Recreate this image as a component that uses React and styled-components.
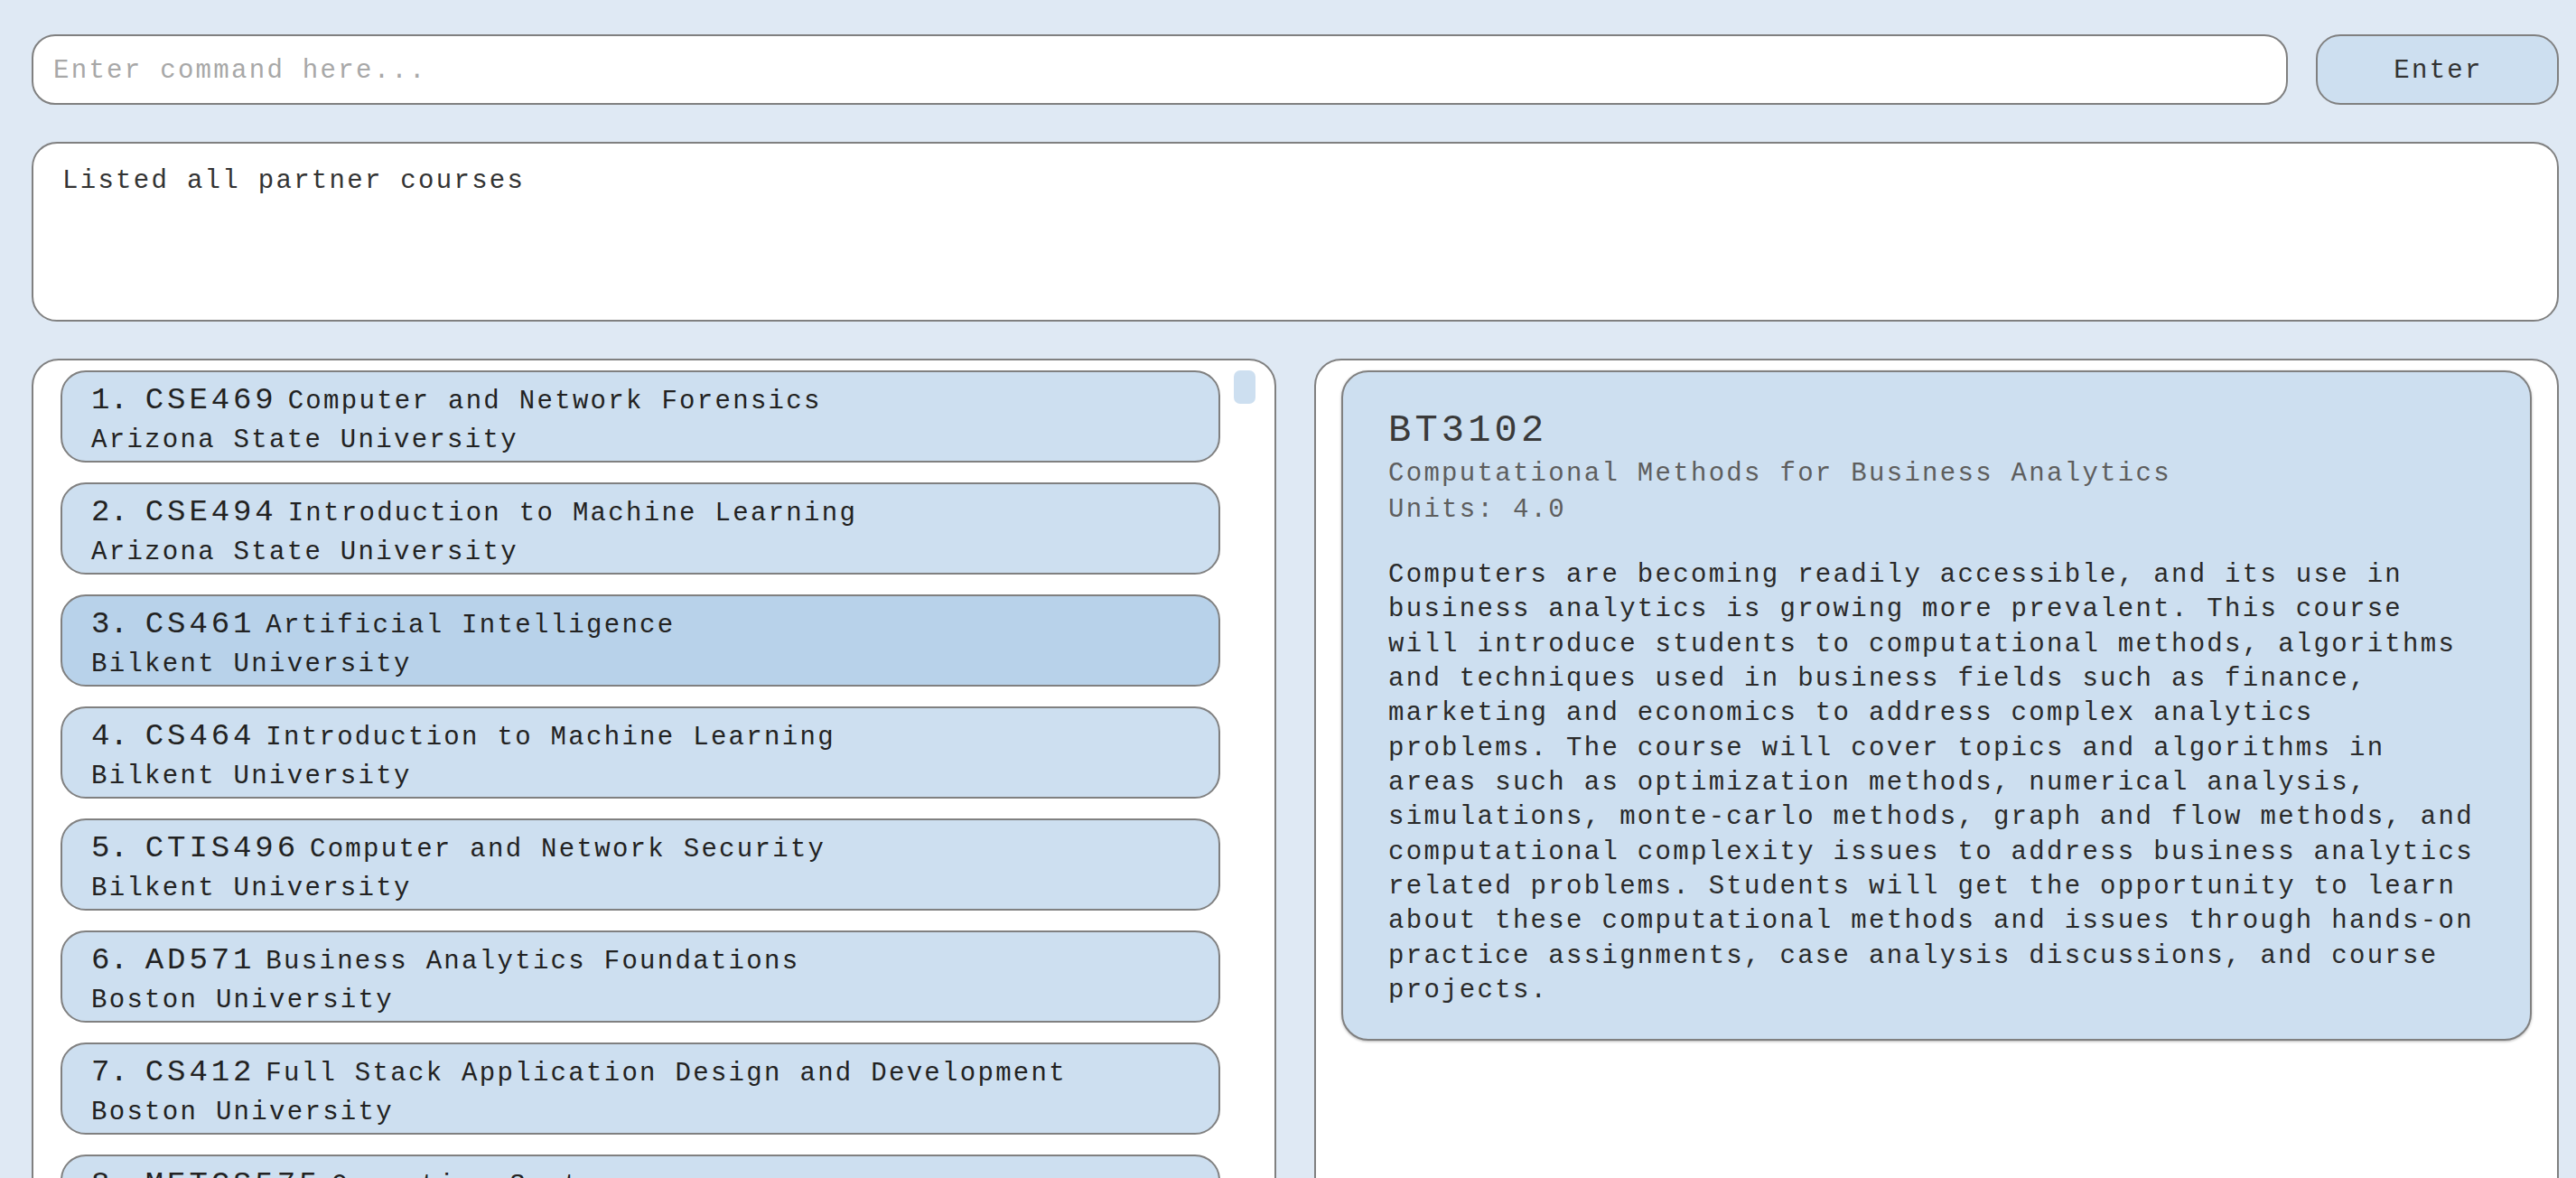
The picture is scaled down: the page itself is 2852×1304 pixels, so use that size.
import React from "react";
import styled, { createGlobalStyle } from "styled-components";

const GlobalStyle = createGlobalStyle`
  html, body {
    margin: 0;
    padding: 0;
    overflow: hidden;
    background: #dfe9f4;
  }
  body {
    font-family: "Liberation Mono", "DejaVu Sans Mono", monospace;
    color: #2e2e2e;
  }
  * { box-sizing: border-box; }
`;

const mono = `
  font-family: "Liberation Mono", "DejaVu Sans Mono", monospace;
  font-size: 29px;
  letter-spacing: 2.3px;
`;

const Page = styled.div`
  display: flex;
  flex-direction: column;
  gap: 41px;
  padding: 38px 19px 0 35px;
  height: 1304px;
`;

const CommandBar = styled.div`
  display: flex;
  gap: 31px;
  height: 78px;
`;

const CommandInput = styled.input`
  flex: 1;
  height: 78px;
  border: 2px solid #808080;
  border-radius: 26px;
  background: #ffffff;
  padding: 3px 22px 0;
  ${mono}
  color: #2e2e2e;
  outline: none;
  &::placeholder {
    color: #a8a8a8;
  }
`;

const EnterButton = styled.button`
  width: 269px;
  height: 78px;
  border: 2px solid #808080;
  border-radius: 27px;
  background: #cddff0;
  ${mono}
  color: #333333;
  padding: 3px 0 0 2px;
  cursor: pointer;
`;

const ResultBox = styled.div`
  height: 199px;
  background: #ffffff;
  border: 2px solid #808080;
  border-radius: 28px;
  padding: 22px 32px;
  ${mono}
  line-height: 40px;
  color: #333333;
`;

const Panels = styled.div`
  display: grid;
  grid-template-columns: 1fr 1fr;
  gap: 42px;
  flex: 1;
  min-height: 0;
`;

const Panel = styled.div`
  background: #ffffff;
  border: 2px solid #808080;
  border-radius: 30px;
  height: 960px;
  overflow: hidden;
`;

const ListPanel = styled(Panel)`
  display: flex;
  gap: 15px;
  padding: 11px 21px 0 30px;
`;

const CardColumn = styled.div`
  flex: 1;
  display: flex;
  flex-direction: column;
  gap: 22px;
  overflow: hidden;
`;

const ScrollThumb = styled.div`
  flex: none;
  width: 24px;
  height: 37px;
  border-radius: 7px;
  background: #cddff0;
`;

const CourseCard = styled.div`
  flex: none;
  height: 102px;
  border: 2px solid #808080;
  border-radius: 28px;
  background: ${(p) => (p.$selected ? "#b8d2ea" : "#cddff0")};
  padding: 8px 32px 0;
  color: #222222;
`;

const CardHeadRow = styled.div`
  display: flex;
  align-items: baseline;
  white-space: nowrap;
`;

const Index = styled.span`
  font-family: "Liberation Mono", "DejaVu Sans Mono", monospace;
  font-size: 34px;
  line-height: 46px;
  margin-right: 19px;
`;

const Code = styled.span`
  font-family: "Liberation Mono", "DejaVu Sans Mono", monospace;
  font-size: 34px;
  letter-spacing: 3.9px;
  line-height: 46px;
`;

const CourseTitle = styled.span`
  ${mono}
  line-height: 46px;
  margin-left: 12px;
`;

const University = styled.div`
  ${mono}
  line-height: 40px;
  white-space: nowrap;
`;

const DetailPanel = styled(Panel)`
  padding: 11px 28px 0;
`;

const DetailCard = styled.div`
  background: #cddff0;
  border: 2px solid #808080;
  border-radius: 30px;
  padding: 40px 50px 34px;
  box-shadow: 0 1px 3px rgba(0, 0, 0, 0.3);
`;

const DetailCode = styled.div`
  font-family: "Liberation Mono", "DejaVu Sans Mono", monospace;
  font-size: 42px;
  letter-spacing: 4.2px;
  line-height: 50px;
  color: #3a3a3a;
`;

const DetailMeta = styled.div`
  ${mono}
  line-height: 40px;
  color: #5e5e5e;
  margin-top: ${(p) => p.$top || 0}px;
`;

const DetailBody = styled.p`
  ${mono}
  line-height: 38.35px;
  color: #2a2a2a;
  margin: 33px 0 0;
`;

const courses = [
  { code: "CSE469", title: "Computer and Network Forensics", uni: "Arizona State University" },
  { code: "CSE494", title: "Introduction to Machine Learning", uni: "Arizona State University" },
  { code: "CS461", title: "Artificial Intelligence", uni: "Bilkent University", selected: true },
  { code: "CS464", title: "Introduction to Machine Learning", uni: "Bilkent University" },
  { code: "CTIS496", title: "Computer and Network Security", uni: "Bilkent University" },
  { code: "AD571", title: "Business Analytics Foundations", uni: "Boston University" },
  { code: "CS412", title: "Full Stack Application Design and Development", uni: "Boston University" },
  { code: "METCS575", title: "Operating Systems", uni: "Boston University" },
  { code: "METCS662", title: "Database Design", uni: "Boston University" },
];

const description =
  "Computers are becoming readily accessible, and its use in business analytics is growing more prevalent. This course will introduce students to computational methods, algorithms and techniques used in business fields such as finance, marketing and economics to address complex analytics problems. The course will cover topics and algorithms in areas such as optimization methods, numerical analysis, simulations, monte-carlo methods, graph and flow methods, and computational complexity issues to address business analytics related problems. Students will get the opportunity to learn about these computational methods and issues through hands-on practice assignments, case analysis discussions, and course projects.";

export default function App() {
  return (
    <>
      <GlobalStyle />
      <Page>
        <CommandBar>
          <CommandInput placeholder="Enter command here..." />
          <EnterButton>Enter</EnterButton>
        </CommandBar>
        <ResultBox>Listed all partner courses</ResultBox>
        <Panels>
          <ListPanel>
            <CardColumn>
              {courses.map((c, i) => (
                <CourseCard key={c.code} $selected={c.selected}>
                  <CardHeadRow>
                    <Index>{i + 1}.</Index>
                    <Code>{c.code}</Code>
                    <CourseTitle>{c.title}</CourseTitle>
                  </CardHeadRow>
                  <University>{c.uni}</University>
                </CourseCard>
              ))}
            </CardColumn>
            <ScrollThumb />
          </ListPanel>
          <DetailPanel>
            <DetailCard>
              <DetailCode>BT3102</DetailCode>
              <DetailMeta $top={3}>Computational Methods for Business Analytics</DetailMeta>
              <DetailMeta>Units: 4.0</DetailMeta>
              <DetailBody>{description}</DetailBody>
            </DetailCard>
          </DetailPanel>
        </Panels>
      </Page>
    </>
  );
}
